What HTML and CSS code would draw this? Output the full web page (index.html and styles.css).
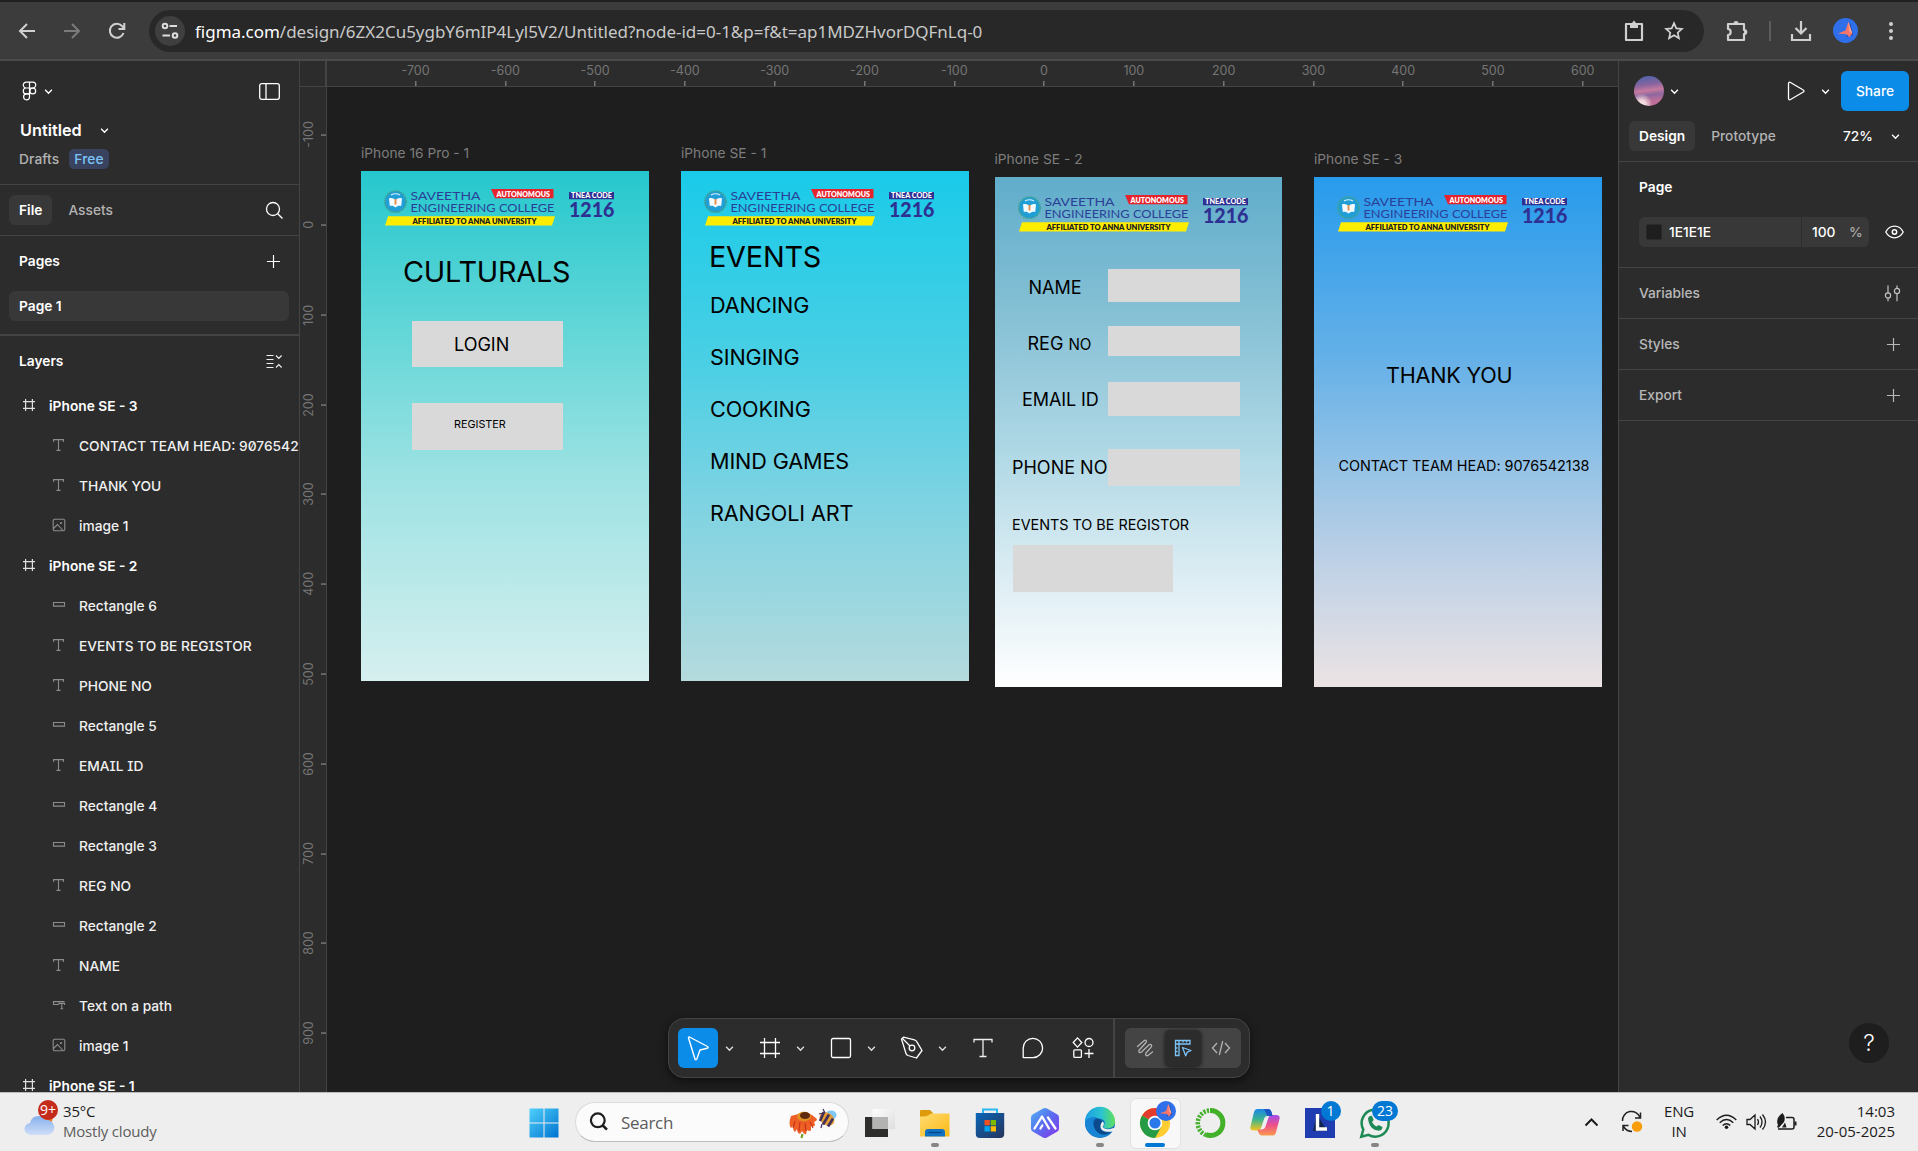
FILE: index.html
```html
<!DOCTYPE html>
<html lang="en">
<head>
<meta charset="utf-8">
<title>Untitled – Figma</title>
<link rel="stylesheet" href="styles.css">
</head>
<body>
<svg class="defs" width="0" height="0" aria-hidden="true">
  <defs>
    <linearGradient id="winblue" x1="0" y1="0" x2="1" y2="1"><stop offset="0" stop-color="#4fd0fb"/><stop offset="1" stop-color="#0073d0"/></linearGradient>
    <linearGradient id="store" x1="0" y1="0" x2="1" y2="1"><stop offset="0" stop-color="#0a66b8"/><stop offset="1" stop-color="#26345c"/></linearGradient>
    <linearGradient id="hex" x1="0" y1="0" x2="1" y2="1"><stop offset="0" stop-color="#4fb4f2"/><stop offset=".5" stop-color="#5a6bef"/><stop offset="1" stop-color="#8a35e8"/></linearGradient>
    <linearGradient id="edgetop" x1="0" y1="0" x2="1" y2="0"><stop offset="0" stop-color="#1b9de2"/><stop offset=".55" stop-color="#2bc3d2"/><stop offset="1" stop-color="#5fe05a"/></linearGradient>
    <linearGradient id="cop1" x1="0" y1="0" x2="0" y2="1"><stop offset="0" stop-color="#1c87e6"/><stop offset=".5" stop-color="#3fb58d"/><stop offset="1" stop-color="#f5c51c"/></linearGradient>
    <linearGradient id="cop2" x1="0" y1="0" x2="0" y2="1"><stop offset="0" stop-color="#a24bea"/><stop offset=".5" stop-color="#ee5189"/><stop offset="1" stop-color="#fb9a4b"/></linearGradient>
    <linearGradient id="fold" x1="0" y1="0" x2="1" y2="1"><stop offset="0" stop-color="#ffdc72"/><stop offset="1" stop-color="#fbb915"/></linearGradient>
    <linearGradient id="cloud" x1="0" y1="0" x2="0" y2="1"><stop offset="0" stop-color="#86b0ec"/><stop offset="1" stop-color="#d0def8"/></linearGradient>
    <linearGradient id="glass" x1="0" y1="0" x2="1" y2="1"><stop offset="0" stop-color="#fff"/><stop offset="1" stop-color="#dcdcdc"/></linearGradient>
  </defs>
  <symbol id="chev" viewBox="0 0 8 8"><path d="M1 2.5l3 3 3-3" fill="none" stroke="currentColor" stroke-width="1.2"/></symbol>
  <symbol id="plus" viewBox="0 0 16 16"><path d="M8 1v14M1 8h14" fill="none" stroke="currentColor" stroke-width="1.25"/></symbol>
  <symbol id="frame" viewBox="0 0 14 14"><path d="M3.6 1v12M10.4 1v12M1 3.6h12M1 10.4h12" fill="none" stroke="currentColor" stroke-width="1.2"/></symbol>
  <symbol id="text" viewBox="0 0 14 14"><path d="M1.6 4V1.6h9.8V4M6.5 1.6v10.8M4.5 12.4h4" fill="none" stroke="currentColor" stroke-width="1.1"/></symbol>
  <symbol id="rect" viewBox="0 0 14 14"><path d="M1.5 4.5h11v3.6h-11z" fill="none" stroke="currentColor" stroke-width="1.1"/></symbol>
  <symbol id="image" viewBox="0 0 14 14"><rect x="1.2" y="1.2" width="11.6" height="11.6" rx="1.6" fill="none" stroke="currentColor" stroke-width="1.1"/><path d="M1.5 10.5l4-4 5.5 6" fill="none" stroke="currentColor" stroke-width="1.1"/><circle cx="9" cy="5" r="1.1" fill="currentColor"/></symbol>
  <symbol id="pathtext" viewBox="0 0 14 14"><path d="M6 6.5H1.5V3.6h11M6.8 7V5.4h5.8V7M9.8 5.4v5.4M8.5 10.8h2.6" fill="none" stroke="currentColor" stroke-width="1.1"/></symbol>
  <symbol id="bird" viewBox="0 0 26 26"><circle cx="13" cy="13" r="13" fill="#2f6fe9"/><path d="M14 20l4-15 3 13z" fill="#2450ad"/><path d="M16 4l-3 9-8 3 9 1 3 3 3-4z" fill="#f4766a"/><path d="M16 4l1 10 3 2z" fill="#ffa394"/></symbol>
  <symbol id="college" viewBox="0 0 232 38">
    <circle cx="11.5" cy="12.7" r="10.6" fill="#1f9ed8" stroke="#3da295" stroke-width="2" stroke-dasharray="1.4 1"/>
    <path d="M5 9.500c2.500-1 4.700 0 6.500 1.500c1.800-1.500 4-2.500 6.500-1.500l-.800 7.500c-2.200-.500-4 0-5.700 1.500c-1.700-1.500-3.500-2-5.700-1.500z" fill="#f4fbff"/><path d="M11.500 10v5.500" stroke="#e88a3c" stroke-width="1.800"/>
    <path d="M7 6q4.500-2.500 9 0" fill="none" stroke="#d9f1fb" stroke-width="1.200"/>
    <text class="college-name" x="26.500" y="10.500" textLength="70" lengthAdjust="spacingAndGlyphs">SAVEETHA</text>
    <text class="college-name" x="26.500" y="23" textLength="144" lengthAdjust="spacingAndGlyphs">ENGINEERING COLLEGE</text>
    <path d="M107 0h62.500v9.200H111z" fill="#e5232d"/>
    <text class="college-tag" x="112.500" y="7.600" fill="#fff" textLength="53.500" lengthAdjust="spacingAndGlyphs">AUTONOMOUS</text>
    <path d="M4 27.200h167l-3 9.400H1z" fill="#ffed00"/>
    <text class="college-tag" x="28.500" y="34.500" fill="#20201c" textLength="124" lengthAdjust="spacingAndGlyphs">AFFILIATED TO ANNA UNIVERSITY</text>
    <path d="M185 3h45v7.200h-45z" fill="#2e3192"/>
    <text class="college-tnea" x="187" y="9" textLength="41" lengthAdjust="spacingAndGlyphs">TNEA CODE</text>
    <text class="college-code" x="185" y="28.200" textLength="45.500" lengthAdjust="spacingAndGlyphs">1216</text>
  </symbol>
</svg>

<div class="screen">
  <header class="browser">
    <nav class="browser-nav">
      <svg width="18" height="18" viewBox="0 0 18 18"><path d="M17 9H2M9 2L2 9l7 7" fill="none" stroke="#d0d0d0" stroke-width="2"/></svg>
      <svg width="18" height="18" viewBox="0 0 18 18"><path d="M1 9h15M9 2l7 7-7 7" fill="none" stroke="#7b7b7b" stroke-width="2"/></svg>
      <svg width="18" height="18" viewBox="0 0 18 18"><path d="M15.500 11A7 7 0 1 1 14 4l1.500 2M16.300 1v6H10.500" fill="none" stroke="#d0d0d0" stroke-width="2"/></svg>
    </nav>
    <div class="omnibox">
      <span class="site-info"><svg width="18" height="18" viewBox="0 0 18 18"><g fill="none" stroke="#dedede" stroke-width="2"><circle cx="4" cy="4" r="2.300"/><circle cx="14" cy="13.500" r="2.300"/><path d="M8.500 4H16M1.500 13.500H9"/></g></svg></span>
      <span class="url"><b>figma.com</b>/design/6ZX2Cu5ygbY6mIP4Lyl5V2/Untitled?node-id=0-1&amp;p=f&amp;t=ap1MDZHvorDQFnLq-0</span>
      <svg class="clip" width="20" height="22" viewBox="0 0 20 22"><path d="M2 4h16v16H2z" fill="none" stroke="#cfcfcf" stroke-width="2.200" stroke-linejoin="round"/><path d="M6 3h2l2-2.500L12 3h2v5H6z" fill="#cfcfcf"/></svg>
      <svg width="20" height="20" viewBox="0 0 20 20"><path d="M10 2.200l2.300 5.200 5.600.500-4.200 3.800 1.200 5.600-4.900-3-4.900 3 1.200-5.600L2.100 7.900l5.600-.500z" fill="none" stroke="#d3d3d3" stroke-width="1.700"/></svg>
    </div>
    <div class="browser-tools">
      <svg width="22" height="22" viewBox="0 0 22 22"><path d="M2 4h16v6c3 0 3 4 0 4v6H2v-5c3.500 0 3.500-6 0-6z" fill="none" stroke="#cfcfcf" stroke-width="2.200" stroke-linejoin="round"/><path d="M7.500 3.500a2.500 2.500 0 0 1 5 0zM18 9.500a2.500 2.500 0 0 1 0 5z" fill="#cfcfcf"/></svg>
      <i class="browser-sep"></i>
      <svg width="22" height="22" viewBox="0 0 22 22"><path d="M11 1v12M5.500 8l5.500 5.500L16.500 8M2 14v6h18v-6" fill="none" stroke="#cfcfcf" stroke-width="2.200"/></svg>
      <svg class="profile" width="25" height="25"><use href="#bird"/></svg>
      <svg class="kebab" width="6" height="20" viewBox="0 0 6 20"><g fill="#cfcfcf"><circle cx="3" cy="3" r="2"/><circle cx="3" cy="10" r="2"/><circle cx="3" cy="17" r="2"/></g></svg>
    </div>
  </header>

  <main class="workspace">
    <aside class="left">
      <div class="file-head">
        <div class="row brand">
          <svg width="15" height="20" viewBox="0 0 16 21"><g fill="none" stroke="#fff" stroke-width="1.300"><path d="M8 1H4.500a3.150 3.150 0 0 0 0 6.300H8zM8 1h3.500a3.150 3.150 0 0 1 0 6.300H8zM8 7.300H4.500a3.150 3.150 0 0 0 0 6.300H8z"/><circle cx="11.500" cy="10.450" r="3.100"/><path d="M8 13.600H4.500A3.150 3.150 0 1 0 8 16.800z"/></g></svg>
          <svg class="chev" width="9" height="9"><use href="#chev"/></svg>
          <svg class="push" width="21" height="17" viewBox="0 0 21 17"><rect x=".7" y=".7" width="19.600" height="15.600" rx="2" fill="none" stroke="#fff" stroke-width="1.300"/><path d="M7 1v15" stroke="#fff" stroke-width="1.300"/></svg>
        </div>
        <div class="row title"><span>Untitled</span><svg width="9" height="9"><use href="#chev"/></svg></div>
        <div class="row drafts"><span>Drafts</span><span class="free">Free</span></div>
      </div>
      <div class="row tabs"><span class="tab on">File</span><span class="tab">Assets</span>
        <svg class="push" width="19" height="19" viewBox="0 0 19 19"><circle cx="8" cy="8" r="6.500" fill="none" stroke="#fff" stroke-width="1.300"/><path d="M12.700 12.700L17.500 17.500" stroke="#fff" stroke-width="1.300"/></svg></div>
      <div class="pages">
        <div class="row pages-head"><span>Pages</span><svg class="push" width="15" height="15"><use href="#plus"/></svg></div>
        <div class="page-item">Page 1</div>
      </div>
      <div class="row layers-head"><span>Layers</span>
        <svg class="push" width="17" height="15" viewBox="0 0 17 15"><path d="M.5 1.500h7M.5 5.500h7M.5 9.500h7M.5 13.500h7M10 1.500l2.800 2.800 2.800-2.800M10 13.500l2.800-2.800 2.800 2.800" fill="none" stroke="#eee" stroke-width="1.200"/></svg></div>
      <ul class="layers">
        <li class="top"><svg><use href="#frame"/></svg>iPhone SE - 3</li>
        <li><svg><use href="#text"/></svg>CONTACT TEAM HEAD: 9076542138</li>
        <li><svg><use href="#text"/></svg>THANK YOU</li>
        <li><svg><use href="#image"/></svg>image 1</li>
        <li class="top"><svg><use href="#frame"/></svg>iPhone SE - 2</li>
        <li><svg><use href="#rect"/></svg>Rectangle 6</li>
        <li><svg><use href="#text"/></svg>EVENTS TO BE REGISTOR</li>
        <li><svg><use href="#text"/></svg>PHONE NO</li>
        <li><svg><use href="#rect"/></svg>Rectangle 5</li>
        <li><svg><use href="#text"/></svg>EMAIL ID</li>
        <li><svg><use href="#rect"/></svg>Rectangle 4</li>
        <li><svg><use href="#rect"/></svg>Rectangle 3</li>
        <li><svg><use href="#text"/></svg>REG NO</li>
        <li><svg><use href="#rect"/></svg>Rectangle 2</li>
        <li><svg><use href="#text"/></svg>NAME</li>
        <li><svg><use href="#pathtext"/></svg>Text on a path</li>
        <li><svg><use href="#image"/></svg>image 1</li>
        <li class="top"><svg><use href="#frame"/></svg>iPhone SE - 1</li>
      </ul>
    </aside>

    <section class="stage">
      <div class="corner"></div>
      <div class="ruler-x"><span>-700</span><span>-600</span><span>-500</span><span>-400</span><span>-300</span><span>-200</span><span>-100</span><span>0</span><span>100</span><span>200</span><span>300</span><span>400</span><span>500</span><span>600</span></div>
      <div class="ruler-y"><span>-100</span><span>0</span><span>100</span><span>200</span><span>300</span><span>400</span><span>500</span><span>600</span><span>700</span><span>800</span><span>900</span></div>
      <div class="canvas">
        <article class="phone p1">
          <h3>iPhone 16 Pro - 1</h3>
          <svg class="logo"><use href="#college"/></svg>
          <span class="t xl culturals">CULTURALS</span>
          <i class="box login-box"></i><span class="t md login">LOGIN</span>
          <i class="box register-box"></i><span class="t xs register">REGISTER</span>
        </article>
        <article class="phone p2">
          <h3>iPhone SE - 1</h3>
          <svg class="logo"><use href="#college"/></svg>
          <span class="t xl events">EVENTS</span>
          <div class="event-list"><span>DANCING</span><span>SINGING</span><span>COOKING</span><span>MIND GAMES</span><span>RANGOLI ART</span></div>
        </article>
        <article class="phone p3">
          <h3>iPhone SE - 2</h3>
          <svg class="logo"><use href="#college"/></svg>
          <span class="t md name">NAME</span><i class="box name-box"></i>
          <span class="t md reg">REG <small>NO</small></span><i class="box reg-box"></i>
          <span class="t md email">EMAIL ID</span><i class="box email-box"></i>
          <i class="box phone-box"></i><span class="t md phone-no">PHONE NO</span>
          <span class="t sm registor">EVENTS TO BE REGISTOR</span><i class="box events-box"></i>
        </article>
        <article class="phone p4">
          <h3>iPhone SE - 3</h3>
          <svg class="logo"><use href="#college"/></svg>
          <span class="t lg thanks">THANK YOU</span>
          <span class="t sm contact">CONTACT TEAM HEAD: 9076542138</span>
        </article>

        <div class="toolbar">
          <div class="tools">
            <span class="tool active"><svg width="24" height="28" viewBox="0 0 24 28"><path d="M3.500 3l18 9.500c1 .600.800 1.500-.200 1.800L14 16l-3.200 9c-.500 1-1.600.900-1.900-.200L2.600 4.200C2.300 3.200 2.800 2.700 3.500 3z" fill="none" stroke="#fff" stroke-width="1.400" stroke-linejoin="round"/></svg></span><svg class="tc"><use href="#chev"/></svg>
            <span class="tool"><svg width="22" height="22" viewBox="0 0 22 22"><path d="M5.500 1v20M16.500 1v20M1 5.500h20M1 16.500h20" fill="none" stroke="#fff" stroke-width="1.300"/></svg></span><svg class="tc"><use href="#chev"/></svg>
            <span class="tool"><svg width="22" height="22" viewBox="0 0 22 22"><rect x="1.500" y="1.500" width="19" height="19" rx="1.500" fill="none" stroke="#fff" stroke-width="1.300"/></svg></span><svg class="tc"><use href="#chev"/></svg>
            <span class="tool"><svg width="24" height="24" viewBox="0 0 24 24"><path d="M1.500 3l2-1.800 11 2.600q1.700.500 2.400 2L22 14.500 16.500 22l-8.500-2.500q-1.500-.500-2-2z" fill="none" stroke="#fff" stroke-width="1.300" stroke-linejoin="round"/><circle cx="12" cy="12" r="2.800" fill="none" stroke="#fff" stroke-width="1.300"/><path d="M2.500 2.500l7.500 7.500" stroke="#fff" stroke-width="1.300"/></svg></span><svg class="tc"><use href="#chev"/></svg>
            <span class="tool wide"><svg width="20" height="20" viewBox="0 0 20 20"><path d="M1 4.500V1.500h18v3M10 1.500v17M6.500 18.500h7" fill="none" stroke="#eee" stroke-width="1.300"/></svg></span>
            <span class="tool wide"><svg width="22" height="22" viewBox="0 0 22 22"><path d="M1.200 20.500V11a9.700 9.700 0 1 1 9.800 9.700H1.500z" fill="none" stroke="#fff" stroke-width="1.300"/></svg></span>
            <span class="tool wide"><svg width="22" height="22" viewBox="0 0 22 22"><g fill="none" stroke="#fff" stroke-width="1.300"><path d="M5.500.900l4.300 4.600-4.300 4.600L1.200 5.500zM12.500 16.500h9M17 12v9"/><circle cx="17" cy="5.500" r="4"/><rect x="1.800" y="12.800" width="7.600" height="7.600" rx="1"/></g></svg></span>
          </div>
          <div class="modes">
            <span><svg width="18" height="18" viewBox="0 0 18 18"><path d="M1.500 7.500L8 1.800c2-1.500 3.300.200 1.800 2L3.300 11c-1.500 2 .400 3.500 2.200 2L12.800 6c2-1.500 3.800.300 2.300 2.200L10 14c-1.300 1.900.500 3.500 2.200 2.200L16.500 13" fill="none" stroke="#b3b3b3" stroke-width="1.300" stroke-linecap="round"/></svg></span>
            <span class="mode-on"><svg width="18" height="18" viewBox="0 0 18 18"><path d="M16 5V1.500H1.500v15H5V5h11zM5 5V1.500M9 1.500v2M12.500 1.500v2M1.500 5H5M1.500 9h2M1.500 12.500h2" fill="none" stroke="#7cc4f8" stroke-width="1.300"/><path d="M8.500 8.500l8.500 3-3.700 1.600-1.600 3.700z" fill="none" stroke="#7cc4f8" stroke-width="1.300" stroke-linejoin="round"/></svg></span>
            <span><svg width="20" height="16" viewBox="0 0 20 16"><path d="M6 3L1.500 8 6 13M14 3l4.500 5L14 13M11.700 1L8.300 15" fill="none" stroke="#b3b3b3" stroke-width="1.300"/></svg></span>
          </div>
        </div>
      </div>
    </section>

    <aside class="right">
      <div class="share-row">
        <span class="user-photo"></span><svg class="uc" width="9" height="9"><use href="#chev"/></svg>
        <svg class="push" width="19" height="20" viewBox="0 0 19 20"><path d="M1.500 2.500v15c0 1.200 1 1.600 2 1L16.300 11c.9-.500.900-1.500 0-2L3.500 1.500c-1-.600-2-.200-2 1z" fill="none" stroke="#fff" stroke-width="1.300"/></svg>
        <svg class="pc" width="9" height="9"><use href="#chev"/></svg>
        <button>Share</button>
      </div>
      <div class="mode-row"><span class="tab on">Design</span><span class="tab">Prototype</span><span class="zoom">72%</span><svg width="9" height="9"><use href="#chev"/></svg></div>
      <div class="page-prop">
        <h4>Page</h4>
        <div class="row">
          <div class="fill"><i class="swatch"></i><span class="hex">1E1E1E</span><span class="alpha">100</span><span class="pct">%</span></div>
          <svg width="19" height="14" viewBox="0 0 19 14"><path d="M.8 7C3 2.800 6 1.200 9.500 1.200S16 2.800 18.200 7C16 11.200 13 12.800 9.500 12.800S3 11.200.8 7z" fill="none" stroke="#fff" stroke-width="1.300"/><circle cx="9.500" cy="7" r="2.200" fill="none" stroke="#fff" stroke-width="1.500"/></svg>
        </div>
      </div>
      <div class="prop"><span>Variables</span><svg width="17" height="17" viewBox="0 0 17 17"><g fill="none" stroke="#c4c4c4" stroke-width="1.200"><circle cx="4" cy="10.500" r="2.600"/><circle cx="13" cy="6" r="2.600"/><path d="M4 .500v7.400M4 13.200v3M13 .500v2.900M13 8.700v7.500"/></g></svg></div>
      <div class="prop"><span>Styles</span><svg width="15" height="15"><use href="#plus"/></svg></div>
      <div class="prop"><span>Export</span><svg width="15" height="15"><use href="#plus"/></svg></div>
      <div class="help">?</div>
    </aside>
  </main>

  <footer class="taskbar">
    <div class="weather">
      <div class="weather-icon"><svg width="32" height="22" viewBox="0 0 32 22"><circle cx="23" cy="5" r="5.500" fill="#f2811d"/><path d="M7 21a6 6 0 0 1-1-12 8.500 8.500 0 0 1 15.500-3A7.600 7.600 0 0 1 24 21z" fill="url(#cloud)"/></svg><b>9+</b></div>
      <div><p>35°C</p><p class="dim">Mostly cloudy</p></div>
    </div>
    <div class="apps">
      <span class="app start"><svg width="30" height="30" viewBox="0 0 30 30"><path d="M.5.500h14v14H.5zM15.500.500h14v14h-14zM.5 15.500h14v14H.5zM15.500 15.500h14v14h-14z" fill="url(#winblue)"/></svg></span>
      <div class="search">
        <svg width="20" height="20" viewBox="0 0 20 20"><circle cx="8.800" cy="8.300" r="6.900" fill="none" stroke="#1f1f1f" stroke-width="2.200"/><path d="M13.800 13.500l4.200 4.200" stroke="#1f1f1f" stroke-width="2.600"/></svg>
        <span>Search</span>
        <svg class="flower" width="48" height="30" viewBox="0 0 48 30"><path d="M2 7q-3 8 0 12l2-2q0 5 2 6l2-3q0 4 3 5l2-3q2 4 4 3l1-4q3 2 4 0l0-4q4 1 4-1l-1-3q3-1 3-3l-5-4-6-3z" fill="#ee5f26"/><path d="M6 12l-2 7M11 13l-1 9M16 14l1 8M21 13l3 6" stroke="#c8341a" stroke-width="1.200"/><ellipse cx="15" cy="7.500" rx="7" ry="4.700" fill="#e0911f"/><ellipse cx="16" cy="6.500" rx="5" ry="3.600" fill="#5f2c10"/><path d="M13.500 25l-1 4" stroke="#6f9a1f" stroke-width="2"/><ellipse cx="42" cy="6" rx="5.500" ry="4.500" fill="#7fc6f5"/><ellipse cx="38" cy="10" rx="8" ry="6" transform="rotate(35 38 10)" fill="#e59c33"/><path d="M35 3l-4 9M40 5.500l-6 10M44 9.500l-5 8" stroke="#43305c" stroke-width="2.600"/><path d="M30 5l4-1M34 0l2 4M33 15l-1 4" stroke="#43305c" stroke-width="1.200"/></svg>
      </div>
      <span class="app"><svg width="30" height="30" viewBox="0 0 30 30"><path d="M0 9h23v20H0z" fill="#2e2e2c"/><path d="M7.500 1H30v20H7.500z" fill="url(#glass)" opacity=".9"/><path d="M7.500 9H23v12H7.500z" fill="#b3b3b2"/></svg></span>
      <span class="app"><svg width="30" height="30" viewBox="0 0 30 30"><path d="M0 3q0-1 1-1h9l3 3v5H0z" fill="#dd9b0b"/><path d="M0 8.500q6 .500 9-1.500l2-1.500h18.500v23H0z" fill="url(#fold)"/><path d="M5 28.500V24q0-3 3-3h14q3 0 3 3v4.500z" fill="#1172c4"/><path d="M8.500 24.500h13" stroke="#074481" stroke-width="1.200"/></svg><i class="run"></i></span>
      <span class="app"><svg width="30" height="30" viewBox="0 0 30 30"><path d="M8 6V1.500h14V6" fill="none" stroke="#2ab7f2" stroke-width="2"/><path d="M.8 5h28.400v21q0 4-4 4H4.800q-4 0-4-4z" fill="url(#store)"/><path d="M9.500 12h5.300v5.300H9.500z" fill="#f25022"/><path d="M15.700 12H21v5.300h-5.300z" fill="#7fba00"/><path d="M9.500 18.200h5.300v5.300H9.500z" fill="#00a4ef"/><path d="M15.700 18.200H21v5.300h-5.300z" fill="#ffb900"/></svg></span>
      <span class="app"><svg width="30" height="30" viewBox="0 0 30 30"><path d="M15 0q1 0 2 .600L27 6.300q2 1 2 3.200v11q0 2.200-2 3.200L17 29.400q-2 1-4 0L3 23.700q-2-1-2-3.200v-11q0-2.200 2-3.200L13 .600Q14 0 15 0z" fill="url(#hex)"/><path d="M4.500 20.500L12 8.500l7 12M10.500 20.500l1.800-3M18 9.500l7.500 11" fill="none" stroke="#fff" stroke-width="2.300" stroke-linecap="round" stroke-linejoin="round"/></svg></span>
      <span class="app"><svg width="30" height="30" viewBox="0 0 30 30"><circle cx="15" cy="15" r="15" fill="#1270bd"/><path d="M0 14A15 15 0 0 1 30 13.500c0 5-4 7-8 7-3 0-5-1.500-3-3.500 2-2.500 0-6.500-5-6.500C7 9.500 1 12 0 14z" fill="url(#edgetop)"/><path d="M0 15c1-4.500 7-7 12-5.500-5 1-5 6.500-2.500 10.500C12 26 20 27.500 27 23.500 21 33 1.500 31.500 0 15z" fill="#1784d6"/><path d="M11 10.500C7 14 8 22 15 26c5 2 9 0 12-2.500-5 1.500-10 .500-11-3.500 0-2 .5-2 1.500-3.200 1.500-2.300-1-6.300-6.500-6.300z" fill="#0c4a8e"/><path d="M17.800 13.500c2 2 .8 4-.2 5 1 3 6 3.500 10.700 1.500l2.200 0-.5 3.500-2.500 0c-6 1-11 0-12-4-.3-2.500.6-5 2.300-6z" fill="#eee"/></svg><i class="run"></i></span>
      <span class="app current"><svg width="30" height="30" viewBox="0 0 30 30"><circle cx="15" cy="15" r="15" fill="#ffcd2e"/><path d="M15 15L2 7.500A15 15 0 0 1 28 7.500z" fill="#e33b2e"/><path d="M2 7.500A15 15 0 0 0 15 30l6.500-11.500L15 15z" fill="#259b46"/><path d="M15 7.500h13.500" stroke="#e33b2e" stroke-width="1.500"/><circle cx="15" cy="15" r="7.300" fill="#fff"/><circle cx="15" cy="15" r="5.600" fill="#2a78ea"/></svg><svg class="bird-badge"><use href="#bird"/></svg><i class="run blue"></i></span>
      <span class="app"><svg width="30" height="30" viewBox="0 0 30 30"><path d="M15 2.500a12.500 12.500 0 1 1-4 24.200" fill="none" stroke="#43b02a" stroke-width="5"/><path d="M11 27A12.700 12.700 0 0 1 14 2.500" fill="none" stroke="#43b02a" stroke-width="4.500" stroke-dasharray="2.200 1.300"/></svg></span>
      <span class="app"><svg width="30" height="30" viewBox="0 0 30 30"><path d="M7 1h11q2.500 0 3.500 3l1 4h-5q-2.500 0-3.500 3l-3 9q-1 2.500-3.500 2.500H4q-4.500 0-3.500-4L4 4q1-3 3-3z" fill="url(#cop1)"/><path d="M23 27.500H12q-2.500 0-3.500-3l-1-3h4q3 0 4-3l3-9q1-2.500 3.500-2.500h4q4.500 0 3.500 4L26 24.500q-1 3-3 3z" fill="url(#cop2)"/><path d="M14 1h4q2.500 0 3.500 3l1 4h-5z" fill="#1c55c4"/></svg></span>
      <span class="app"><svg width="30" height="30" viewBox="0 0 30 30"><path d="M0 0h30v30H0z" fill="#1f3db0"/><path d="M8 23l4-17 10 17z" fill="#13234f"/><path d="M12.500 6v15H22" fill="none" stroke="#fff" stroke-width="3.400"/></svg><b class="badge">1</b></span>
      <span class="app"><svg width="30" height="30" viewBox="0 0 30 30"><path d="M1.300 28.700l2-7.200A13.500 13.500 0 1 1 8.500 26.800z" fill="none" stroke="#1d8a55" stroke-width="2.500"/><path d="M8 10q2-3 4-2l1.700 4-1.700 2q1.500 3 4.500 4.500l2-1.500 4 2q0 3-3.500 3.700Q9 22 8 10z" fill="#1d8a55"/></svg><b class="badge two">23</b><i class="run"></i></span>
    </div>
    <div class="tray">
      <svg width="15" height="10" viewBox="0 0 15 10"><path d="M1.500 8.500l6-6 6 6" fill="none" stroke="#1c1c1c" stroke-width="2"/></svg>
      <svg class="sync" width="22" height="22" viewBox="0 0 22 22"><path d="M1.500 10A9 9 0 0 1 19 6.500M19.500 1.500v5.500H14M2 20v-5.500h5.500M2.500 15.500q3 5 8.500 5" fill="none" stroke="#222" stroke-width="1.500"/><circle cx="16" cy="15.500" r="5.200" fill="#f99d0b"/></svg>
      <div class="lang"><p>ENG</p><p>IN</p></div>
      <svg width="21" height="16" viewBox="0 0 21 16"><g fill="none" stroke="#1c1c1c" stroke-width="1.400"><path d="M.7 6Q10.500-3.500 20.300 6M3.700 8.700q6.800-6.500 13.600 0M6.700 11.500q3.800-3.600 7.600 0"/></g><circle cx="10.500" cy="13.300" r="1.800" fill="#1c1c1c"/></svg>
      <svg class="vol" width="21" height="18" viewBox="0 0 21 18"><path d="M1 6.500h3l5-4.500v14l-5-4.500H1zM11.500 6q2 3 0 6M14 3.500q4 5.500 0 11M16.500 1.500q6 7.500 0 15" fill="none" stroke="#1c1c1c" stroke-width="1.300"/></svg>
      <svg class="bat" width="21" height="17" viewBox="0 0 21 17"><path d="M10 3.500h6q2 0 2 2v7.500q0 2-2 2H2" fill="none" stroke="#1c1c1c" stroke-width="1.500"/><path d="M18.500 7.500h2v4h-2z" fill="#1c1c1c"/><path d="M6.500-1q3.500 4 1.500 9l-5 5.500q-1 .500-2-.500l1-2Q-1 4 6.500-1zM6 13.500l3-5 1.500 5z" fill="#1c1c1c"/></svg>
      <div class="clock"><p>14:03</p><p>20-05-2025</p></div>
    </div>
  </footer>
</div>
</body>
</html>
```
FILE: styles.css
```css
* { box-sizing: border-box; }
body { margin: 0; font-family: Inter, "Liberation Sans", sans-serif; font-size: 13.75px; color: #fff; background: #1e1e1e; }
p, h3, h4, ul { margin: 0; padding: 0; font-weight: 400; }
svg { display: block; flex: none; overflow: visible; }
.defs { position: absolute; }
.screen { width: 1918px; height: 1151px; display: flex; flex-direction: column; overflow: hidden; }
.row { display: flex; align-items: center; }
.push { margin-left: auto; }

/* browser bar */
.browser { height: 61px; flex: none; display: flex; align-items: center; background: #3c3c3c; border-top: 2px solid #1f2121; border-bottom: 2px solid #4a4a4a; }
.browser-nav { width: 149px; padding-left: 18px; display: flex; gap: 27px; }
.omnibox { width: 1555px; height: 42px; border-radius: 21px; background: #282828; display: flex; align-items: center; padding: 0 20px 0 6px; margin-top: 1px; }
.site-info { width: 30px; height: 30px; border-radius: 50%; background: #3f3f3f; display: grid; place-items: center; }
.url { font-family: "Noto Sans", "Open Sans", sans-serif; font-size: 17px; color: #c9c9c9; margin-left: 10px; flex: 1; white-space: nowrap; letter-spacing: -0.02px; }
.url b { font-weight: 400; color: #fff; }
.clip { margin-right: 20px; }
.browser-tools { flex: 1; display: flex; align-items: center; padding: 0 24px 0 22px; }
.browser-sep { width: 2px; height: 20px; background: #5c5c5c; margin: 0 19px 0 21px; }
.profile { margin-left: 21px; }
.kebab { margin-left: auto; }

/* workspace */
.workspace { flex: 1; min-height: 0; display: flex; }
.left { width: 300px; flex: none; background: #2c2c2c; border-right: 1px solid #444; overflow: hidden; }
.file-head { height: 124px; border-bottom: 1px solid #444; padding: 20px 19px 0 22px; }
.brand { height: 20px; }
.brand .chev { margin-left: 7px; }
.title { height: 20px; margin: 19px 0 0 -2px; font-size: 16.250px; font-weight: 600; }
.title svg { margin-left: 18px; }
.drafts { height: 20px; margin: 9px 0 0 -3px; color: #b3b3b3; font-weight: 450; letter-spacing: .1px; }
.free { margin-left: 10px; padding: 0 5px; height: 20px; line-height: 20px; border-radius: 5px; background: #394360; color: #7cc4f8; font-weight: 500; }
.tabs { height: 51px; border-bottom: 1px solid #444; padding: 0 15px 0 9px; }
.tab { height: 30px; line-height: 30px; padding: 0 10px; border-radius: 6px; color: #b3b3b3; font-weight: 500; }
.tab.on { background: #383838; color: #fff; font-weight: 600; margin-right: 6px; }
.pages { height: 100px; border-bottom: 2px solid #444; }
.pages-head { height: 50px; padding: 0 18px 0 19px; font-weight: 600; }
.page-item { margin: 5px 10px 0 9px; height: 30px; line-height: 30px; padding-left: 10px; border-radius: 6px; background: #383838; font-weight: 600; }
.layers-head { height: 50px; padding: 0 16px 0 19px; font-weight: 600; }
.layers { list-style: none; }
.layers li { height: 40px; display: flex; align-items: center; padding-left: 52px; white-space: nowrap; font-weight: 500; color: #f0f0f0; font-feature-settings: "cv08", "zero"; }
.layers li svg { width: 14px; height: 14px; color: #8c8c8c; margin: -2px 13px 0 0; }
.layers .top { padding-left: 22px; font-weight: 600; color: #fff; }
.layers .top svg { color: #e0e0e0; }

/* rulers and canvas */
.stage { flex: 1; min-width: 0; display: grid; grid-template: 26px 1fr / 27px 1fr; background: #1e1e1e; }
.corner, .ruler-x, .ruler-y { background: #2c2c2c; color: #757575; font-size: 12.500px; overflow: hidden; }
.corner { border-right: 2px solid #444; border-bottom: 1px solid #444; }
.ruler-x { display: flex; padding-left: 43.700px; border-bottom: 1px solid #444; }
.ruler-x span { flex: none; width: 89.790px; height: 25px; line-height: 19px; text-align: center; background: linear-gradient(#757575, #757575) bottom / 1.500px 5px no-repeat; }
.ruler-y { padding-top: 3.100px; border-right: 1px solid #444; }
.ruler-y span { display: block; height: 89.820px; width: 26px; line-height: 17px; text-align: center; writing-mode: vertical-rl; transform: rotate(180deg); background: linear-gradient(#757575, #757575) left / 5px 1.500px no-repeat; }
.canvas { position: relative; overflow: hidden; }
.phone { position: absolute; width: 287.500px; height: 510px; color: #000; }
.phone h3 { position: absolute; left: 0; top: -26px; font-size: 13.750px; line-height: 16px; color: #7d7d7d; white-space: nowrap; }
.p1 { left: 34px; top: 84px; background: linear-gradient(#25c8ce, #66d7d8 33%, #9de2e3 60%, #d6efef); }
.p2 { left: 354px; top: 84px; background: linear-gradient(#19cbe9, #4bcfe4 38%, #80d3e2 66%, #b4dadd); }
.p3 { left: 667.500px; top: 90px; background: linear-gradient(#60adcb, #87c1d5 28%, #b1d9e6 55%, #d8ebf2 76%, #fff); }
.p4 { left: 987px; top: 90px; background: linear-gradient(#279bec, #64b0e8 35%, #90c1e6 55%, #b9cfe6 73%, #ece3e3); }
.logo { position: absolute; left: 23px; top: 18px; width: 232px; height: 38px; }
.college-name { font: 400 12.300px Lato, sans-serif; fill: #2b3f97; }
.college-tag { font: 800 8.200px Lato, sans-serif; }
.college-tnea { font: 900 6.800px Lato, sans-serif; fill: #fff; }
.college-code { font: 900 20.500px Lato, sans-serif; fill: #2e3192; }
.t { position: absolute; line-height: 30px; white-space: nowrap; }
.xl { font-size: 28.800px; letter-spacing: -.2px; }
.lg { font-size: 21.600px; letter-spacing: -.1px; }
.md { font-size: 18px; }
.sm { font-size: 14.400px; letter-spacing: -.02px; }
.xs { font-size: 10.800px; }
.box { position: absolute; background: #d9d9d9; }
.culturals { left: 42px; top: 86px; }
.login-box { left: 50.500px; top: 150px; width: 151px; height: 46px; }
.login { left: 93px; top: 159px; }
.register-box { left: 50.500px; top: 231.500px; width: 151px; height: 47px; }
.register { left: 93px; top: 238.500px; }
.events { left: 28px; top: 71px; }
.event-list { position: absolute; left: 29px; top: 108px; display: grid; grid-auto-rows: 52.080px; font-size: 21.600px; line-height: 52px; letter-spacing: -.1px; white-space: nowrap; }
.name { left: 34px; top: 96px; }
.name-box { left: 113px; top: 92px; width: 132px; height: 33px; }
.reg { left: 33px; top: 152px; }
.reg small { font-size: 15.200px; }
.reg-box { left: 113px; top: 149px; width: 132px; height: 30px; }
.email { left: 27.500px; top: 208px; letter-spacing: -.1px; }
.email-box { left: 113px; top: 205px; width: 132px; height: 34px; }
.phone-no { left: 17.500px; top: 276px; }
.phone-box { left: 113px; top: 272px; width: 132px; height: 37px; }
.registor { left: 17.500px; top: 333px; }
.events-box { left: 18px; top: 368px; width: 160px; height: 47px; }
.thanks { left: 72px; top: 183px; letter-spacing: -.2px; }
.contact { left: 24.500px; top: 273.500px; }

/* floating toolbar */
.toolbar { position: absolute; left: 341px; top: 931px; width: 582px; height: 60px; border-radius: 16px; background: #2c2c2c; border: 1px solid #444; display: flex; box-shadow: 0 3px 10px #0008; }
.tools { width: 446px; border-right: 2px solid #444; padding-left: 9px; display: flex; align-items: center; }
.tool { width: 40px; height: 40px; display: grid; place-items: center; border-radius: 6px; }
.tool:not(.active) { padding-left: 2px; }
.active { background: #0c8ce9; }
.tc { width: 9px; height: 9px; margin: 0 14px 0 7px; color: #ddd; }
.tools .tool:nth-of-type(n+2) { margin-left: 1px; }
.wide { margin-right: 9px; }
.modes { margin: 9px 0 0 10px; width: 116px; height: 40px; border-radius: 6px; background: #444; display: flex; justify-content: space-between; padding: 2px; }
.modes span { width: 36px; height: 36px; display: grid; place-items: center; border-radius: 5px; }
.modes .mode-on { background: #2c2c2c; box-shadow: 0 1px 4px #000a; }

/* right panel */
.right { position: relative; width: 300px; flex: none; background: #2c2c2c; border-left: 1px solid #444; }
.share-row { height: 60px; padding: 0 9px 0 15px; display: flex; align-items: center; }
.user-photo { width: 30px; height: 30px; border-radius: 50%; background: radial-gradient(circle at 25% 95%, #f3dde0 0 10%, transparent 30%), linear-gradient(172deg, #5b64a8 10%, #86649f 30%, #c77a9f 48%, #8d689e 62%, #bd6f99 80%); }
.uc { margin-left: 6px; }
.pc { margin: 0 11px 0 15px; }
button { width: 68px; height: 40px; border: 0; border-radius: 6px; background: #0c8ce9; color: #fff; font: 500 13.750px Inter, sans-serif; padding: 0; }
.mode-row { height: 41px; border-bottom: 1px solid #444; padding: 0 18px 10px 10px; display: flex; align-items: center; }
.zoom { margin: 0 18px 0 auto; font-weight: 500; }
.page-prop { height: 106px; border-bottom: 1px solid #444; padding-left: 20px; }
h4 { line-height: 50px; font-weight: 600; font-size: 13.750px; }
.page-prop .row { height: 40px; gap: 16px; }
.fill { width: 230px; height: 30px; border-radius: 6px; background: #383838; display: flex; align-items: center; font-weight: 500; padding-left: 7px; }
.swatch { width: 16px; height: 16px; border-radius: 2px; background: #1e1e1e; border: 1px solid #2a2a2a; }
.hex { margin-left: 7px; width: 132px; }
.alpha { border-left: 1px solid #2c2c2c; line-height: 30px; padding-left: 10px; width: 48px; }
.pct { color: #a8a8a8; }
.prop { height: 51px; border-bottom: 1px solid #444; padding: 0 17px 0 20px; display: flex; justify-content: space-between; align-items: center; color: #b8b8b8; font-weight: 500; }
.help { position: absolute; left: 230px; top: 962px; width: 40px; height: 40px; border-radius: 50%; background: #1e1e1e; line-height: 40px; text-align: center; font-size: 23px; font-weight: 300; }

/* taskbar */
.taskbar { height: 59px; flex: none; background: #eee; border-top: 1px solid #bbb; color: #1c1c1c; font-family: "Open Sans", "Noto Sans", sans-serif; font-size: 15px; display: flex; }
.taskbar p { line-height: 20px; letter-spacing: -.2px; white-space: nowrap; }
.weather { width: 516px; padding: 8px 0 0 24px; display: flex; }
.weather-icon { position: relative; width: 39px; padding-top: 13px; }
.weather-icon b { position: absolute; left: 14px; top: -1px; width: 20px; height: 20px; border-radius: 50%; background: #c42b1c; color: #fff; font-weight: 400; font-size: 14px; line-height: 20px; text-align: center; }
.dim { color: #5d5d5d; }
.apps { display: flex; }
.app { position: relative; width: 55px; padding: 15px 0 0 12.500px; }
.bird-badge { position: absolute; left: 28.500px; top: 8px; width: 20px; height: 20px; }
.search { width: 274px; height: 40px; margin: 9px 3px 0 4px; border-radius: 20px; background: #fbfbfb; border: 1px solid #dadada; border-bottom-color: #bdbdbd; display: flex; align-items: center; padding: 0 11px 0 13px; font-size: 17px; color: #5c5c5c; }
.search span { margin-left: 12px; flex: 1; letter-spacing: -.3px; }
.flower { margin-top: 3px; }
.run { position: absolute; left: 23.500px; bottom: 4px; width: 8px; height: 4px; border-radius: 2px; background: #868686; }
.run.blue { left: 17.500px; width: 20px; background: #0078d4; }
.current { z-index: 0; }
.current::before { content: ""; position: absolute; z-index: -1; left: 3px; top: 5px; width: 49px; height: 49px; border-radius: 6px; background: #f8f8f8; border: 1px solid #e2e2e2; }
.badge { position: absolute; left: 28.500px; top: 8px; width: 20px; height: 20px; border-radius: 10px; background: #0078d4; color: #fff; font-weight: 400; font-size: 14px; line-height: 20px; text-align: center; }
.badge.two { left: 25px; width: 26px; }
.tray { flex: 1; display: flex; justify-content: flex-end; align-items: center; padding-right: 23px; }
.sync { margin-left: 22px; }
.lang { width: 46px; margin: -2px 14px 0 13px; text-align: center; }
.vol { margin-left: 9px; }
.bat { margin-left: 9px; }
.clock { width: 98px; text-align: right; margin-top: -3px; }
.clock p { letter-spacing: 0; }
```
